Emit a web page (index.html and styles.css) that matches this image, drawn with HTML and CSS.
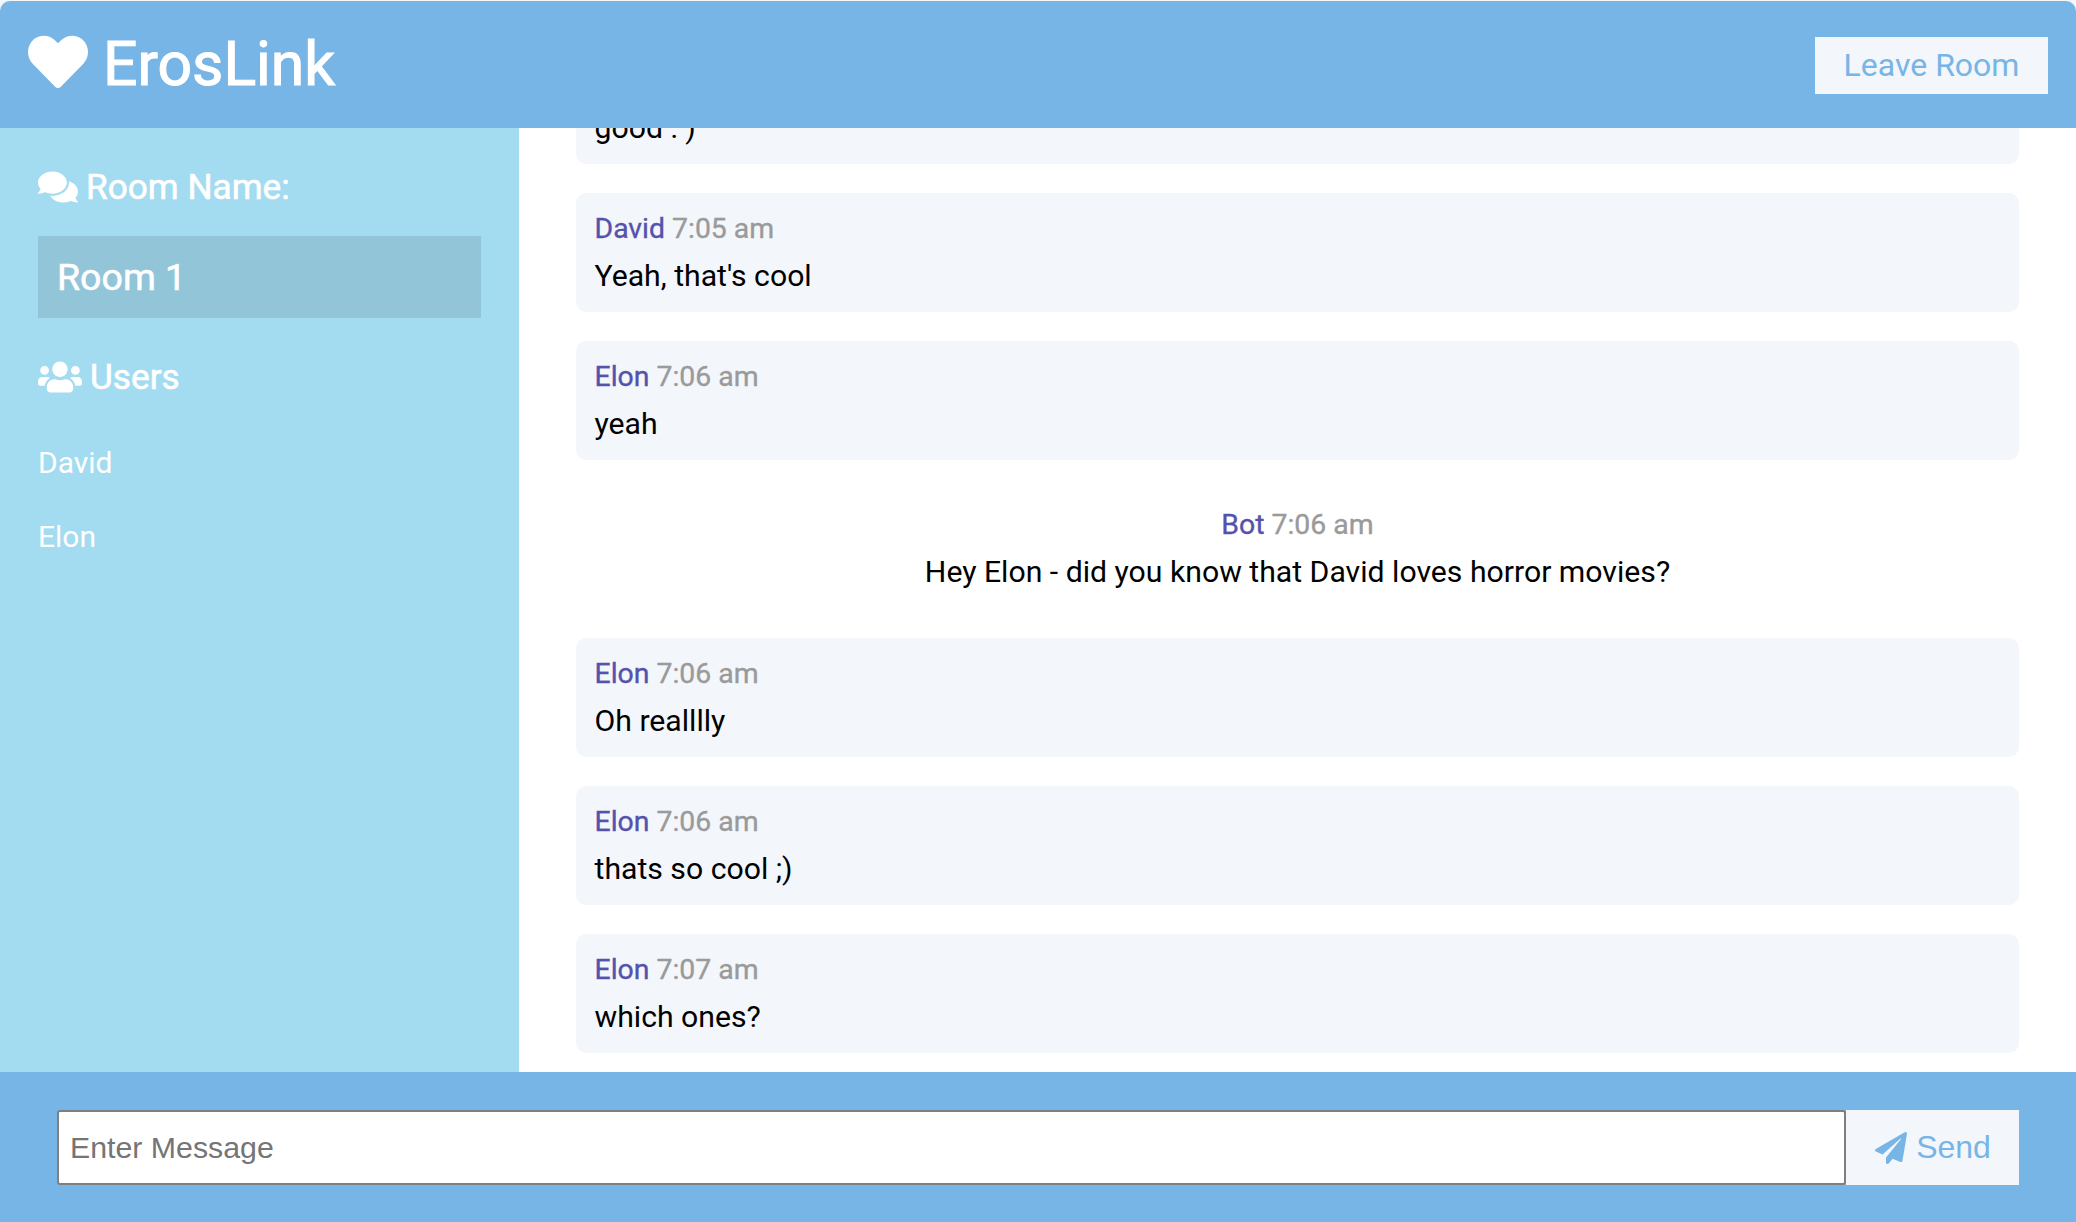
FILE: index.html
```html
<!DOCTYPE html>
<html lang="en">
<head>
<meta charset="utf-8">
<title>ErosLink</title>
<link rel="stylesheet" href="styles.css">
</head>
<body>
<div class="app">
  <header class="top">
    <h1 class="brand">
      <svg class="brand-icon" viewBox="0 0 512 512"><path d="M462.3 62.6C407.5 15.9 326 24.3 275.7 76.2L256 96.5l-19.7-20.3C186.1 24.3 104.5 15.9 49.7 62.6c-62.8 53.6-66.1 149.8-9.9 207.9l193.5 199.8c12.5 12.9 32.8 12.9 45.3 0l193.5-199.8c56.3-58.1 53-154.3-9.8-207.9z"/></svg>
      <span>ErosLink</span>
    </h1>
    <a class="leave">Leave Room</a>
  </header>
  <main class="middle">
    <aside class="side">
      <h3 class="side-title">
        <svg class="comments-icon" viewBox="0 0 576 512"><path d="M416 192c0-88.4-93.1-160-208-160S0 103.6 0 192c0 34.3 14.1 65.9 38 92-13.4 30.2-35.5 54.2-35.8 54.5-2.2 2.3-2.8 5.7-1.5 8.7S4.8 352 8 352c36.6 0 66.9-12.3 88.7-25 32.2 15.7 70.3 25 111.3 25 114.9 0 208-71.6 208-160zm122 220c23.9-26 38-57.7 38-92 0-66.9-53.5-124.2-129.3-148.1.9 6.6 1.3 13.3 1.3 20.1 0 105.9-107.7 192-240 192-10.8 0-21.3-.8-31.7-1.9C207.8 439.6 281.8 480 368 480c41 0 79.1-9.2 111.3-25 21.8 12.7 52.1 25 88.7 25 3.2 0 6.1-1.9 7.3-4.8 1.3-2.9.7-6.3-1.5-8.7-.3-.3-22.4-24.2-35.8-54.5z"/></svg>
        <span>Room Name:</span>
      </h3>
      <h2 class="room">Room 1</h2>
      <h3 class="side-title users-title">
        <svg class="users-icon" viewBox="0 0 640 512"><path d="M96 224c35.3 0 64-28.7 64-64s-28.7-64-64-64-64 28.7-64 64 28.7 64 64 64zm448 0c35.3 0 64-28.7 64-64s-28.7-64-64-64-64 28.7-64 64 28.7 64 64 64zm32 32h-64c-17.6 0-33.5 7.1-45.1 18.6 40.3 22.1 68.9 62 75.1 109.4h66c17.7 0 32-14.3 32-32v-32c0-35.3-28.7-64-64-64zm-256 0c61.9 0 112-50.1 112-112S381.9 32 320 32 208 82.1 208 144s50.1 112 112 112zm76.8 32h-8.3c-20.8 10-43.9 16-68.5 16s-47.6-6-68.5-16h-8.3C179.6 288 128 339.6 128 403.2V432c0 26.5 21.5 48 48 48h288c26.5 0 48-21.5 48-48v-28.8c0-63.6-51.6-115.2-115.2-115.2zm-223.7-13.4C161.5 263.1 145.6 256 128 256H64c-35.3 0-64 28.7-64 64v32c0 17.7 14.3 32 32 32h65.9c6.3-47.4 34.9-87.3 75.2-109.4z"/></svg>
        <span>Users</span>
      </h3>
      <ul class="user-list">
        <li>David</li>
        <li>Elon</li>
      </ul>
    </aside>
    <section class="chat">
      <article class="msg"><p class="meta">Elon <span class="time">7:05 am</span></p><p class="text">good : )</p></article>
      <article class="msg"><p class="meta">David <span class="time">7:05 am</span></p><p class="text">Yeah, that's cool</p></article>
      <article class="msg"><p class="meta">Elon <span class="time">7:06 am</span></p><p class="text">yeah</p></article>
      <article class="msg bot"><p class="meta">Bot <span class="time">7:06 am</span></p><p class="text">Hey Elon - did you know that David loves horror movies?</p></article>
      <article class="msg"><p class="meta">Elon <span class="time">7:06 am</span></p><p class="text">Oh realllly</p></article>
      <article class="msg"><p class="meta">Elon <span class="time">7:06 am</span></p><p class="text">thats so cool ;)</p></article>
      <article class="msg"><p class="meta">Elon <span class="time">7:07 am</span></p><p class="text">which ones?</p></article>
    </section>
  </main>
  <footer class="bottom">
    <form class="send-form">
      <input class="field" type="text" placeholder="Enter Message">
      <button class="send" type="button">
        <svg class="send-icon" viewBox="0 0 512 512"><path d="M476 3.2L12.5 270.6c-18.1 10.4-15.8 35.6 2.2 43.2L121 358.4l287.3-253.2c5.5-4.9 13.3 2.6 8.6 8.3L176 407v80.5c0 23.6 28.5 32.9 42.5 15.8L282 426l124.6 52.2c14.2 6 30.4-2.9 33-18.2l72-432C515 7.8 493.3-6.8 476 3.2z"/></svg>
        <span>Send</span>
      </button>
    </form>
  </footer>
</div>
</body>
</html>
```

FILE: styles.css
```css
* { box-sizing: border-box; }
html, body { margin: 0; height: 100%; background: #fff; }
body { font-family: Roboto, "Liberation Sans", sans-serif; overflow: hidden; }

.app { height: 1222px; padding-top: 1px; display: flex; flex-direction: column; background: #f3f6fb; }

.top {
  flex: 0 0 127px;
  display: flex; align-items: center; justify-content: space-between;
  padding: 0 28px;
  background: #77b5e6;
  color: #fff;
  border-radius: 10px 10px 0 0;
  position: relative; z-index: 1;
}
.brand { margin: 0; display: flex; align-items: center; gap: 15px; font-size: 60.7px; font-weight: 400; -webkit-text-stroke: 1.1px #fff; line-height: 72px; }
.brand-icon { width: 60px; height: 60px; margin-bottom: 5px; fill: #fff; }
.leave {
  width: 233px; height: 57px; margin-top: 1px;
  display: flex; align-items: center; justify-content: center;
  background: #f3f6fb; color: #77b5e6;
  font-size: 32px;
}

.middle { flex: 1 1 auto; min-height: 0; display: flex; background: #fff; }

.side { flex: 0 0 519px; padding: 39px 38px 0; background: #a3dcf0; color: #fff; }
.side-title { margin: 0; display: flex; align-items: center; gap: 8px; font-size: 35.2px; font-weight: 400; -webkit-text-stroke: .6px #fff; line-height: 40px; }
.comments-icon { width: 40px; height: 36px; fill: #fff; }
.users-icon { width: 44px; height: 36px; fill: #fff; }
.room { margin: 29px 0 0; height: 82px; padding: 0 19px; display: flex; align-items: center; background: #93c5d9; font-size: 37.5px; font-weight: 400; -webkit-text-stroke: .6px #fff; }
.users-title { margin-top: 39px; }
.user-list { list-style: none; margin: 47px 0 0; padding: 0; font-size: 30px; }
.user-list li { height: 37px; margin-bottom: 37px; display: flex; align-items: center; }

.chat {
  flex: 1 1 auto; min-width: 0;
  display: flex; flex-direction: column; justify-content: flex-end; gap: 29.2px;
  padding: 0 57px 19px;
  overflow: hidden;
}
.msg { flex: 0 0 119px; padding: 19px 18.5px 18px; border-radius: 10px; background: #f3f6fb; }
.msg.bot { background: #fff; text-align: center; }
.meta { margin: 0; font-size: 28.4px; line-height: 33px; font-weight: 400; -webkit-text-stroke: .35px currentColor; color: #5452ad; }
.time { color: #9a9a9a; }
.text { margin: 14px 0 0; font-size: 30.2px; line-height: 33px; color: #000; }

.bottom { flex: 0 0 150px; padding: 38px 57px 0; background: #77b5e6; }
.send-form { display: flex; height: 75px; }
.field {
  flex: 1 1 auto; min-width: 0; height: 75px;
  padding: 0 11px;
  border: 2px solid #7f7f7f; border-radius: 3px;
  background: #fff;
  font-family: "Liberation Sans", Arial, sans-serif; font-size: 30.3px;
}
.field::placeholder { color: #757575; opacity: 1; }
.send {
  flex: 0 0 173px; height: 75px;
  display: flex; align-items: center; justify-content: center; gap: 9px;
  border: 0; padding: 0 0 0 1px;
  background: #f3f6fb; color: #77b5e6;
  font-family: "Liberation Sans", Arial, sans-serif; font-size: 32px;
}
.send-icon { width: 32px; height: 32px; fill: #77b5e6; }
```
